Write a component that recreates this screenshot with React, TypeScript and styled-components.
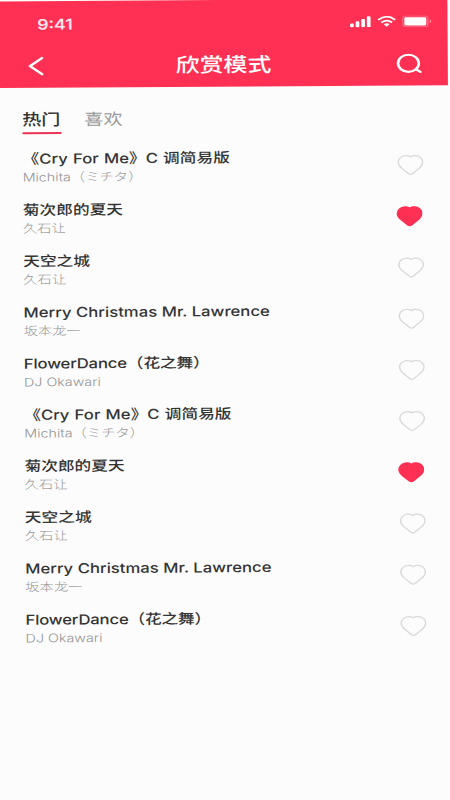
import React from "react";
import styled, { createGlobalStyle } from "styled-components";

const GlobalStyle = createGlobalStyle`
  * { box-sizing: border-box; }
  html, body { margin: 0; padding: 0; background: #fcfcfc; overflow: hidden; }
`;

const Viewport = styled.div`
  width: 450px;
  height: 800px;
  overflow: hidden;
  background: #fcfcfc;
  font-family: Inter, "Noto Sans CJK SC", sans-serif;
`;

/* A 375x812 layout, stretched and slightly tilted on the page. */
const Screen = styled.main`
  width: 375px;
  height: 812px;
  transform-origin: 0 0;
  transform: translateY(1.4px) rotate(-0.37deg) scale(1.193, 0.985);
`;

const Header = styled.header`
  height: 88px;
  margin-left: -2px;
  padding-left: 2px;
  background: #ff3054;
  color: #fff;
`;

const StatusBar = styled.div`
  height: 44px;
  padding: 2px 13.5px 0 31px;
  display: flex;
  align-items: center;
  justify-content: space-between;
`;

const Time = styled.span`
  padding-top: 1px;
  font-size: 14.8px;
  line-height: 18px;
  font-weight: 600;
  color: #ffe9ed;
`;

const StatusIcons = styled.div`
  display: flex;
  align-items: center;
  gap: 5px;
  svg { display: block; }
`;

const NavBar = styled.nav`
  height: 44px;
  padding: 0 19px 0 22px;
  display: grid;
  grid-template-columns: 22px 1fr 26px;
  align-items: center;
  svg { display: block; }
`;

const Title = styled.h1`
  margin: 0;
  text-align: center;
  font-size: 20px;
  line-height: 28px;
  font-weight: 500;
`;

const Tabs = styled.div`
  display: flex;
  gap: 20px;
  padding: 19.5px 0 0 18px;
`;

const Tab = styled.div<{ $active?: boolean }>`
  height: 28px;
  font-size: 16px;
  line-height: 24px;
  font-weight: ${(p) => (p.$active ? 500 : 400)};
  color: ${(p) => (p.$active ? "#333" : "#999")};
  &::after {
    content: "";
    display: block;
    height: 2.2px;
    margin: 1px -0.5px 0;
    border-radius: 1px;
    background: ${(p) => (p.$active ? "#ee3455" : "transparent")};
  }
`;

const List = styled.ul`
  list-style: none;
  margin: 0;
  padding: 6.8px 20px 0 18px;
`;

const Row = styled.li`
  height: 52px;
  display: flex;
  align-items: center;
  justify-content: space-between;
`;

const SongTitle = styled.div<{ $tracking?: number; $wordGap?: number }>`
  font-size: 14px;
  line-height: 20px;
  font-weight: 500;
  letter-spacing: ${(p) => p.$tracking ?? 0}px;
  word-spacing: ${(p) => p.$wordGap ?? 0}px;
  color: #333;
  white-space: nowrap;
`;

const Artist = styled.div`
  font-size: 12px;
  line-height: 17px;
  font-weight: 300;
  color: #959595;
  white-space: nowrap;
`;

const Heart = styled.svg<{ $liked?: boolean }>`
  display: block;
  width: 22.4px;
  height: 21.6px;
  margin-top: 1px;
  margin-right: ${(p) => (p.$liked ? 2 : 1)}px;
  fill: ${(p) => (p.$liked ? "#ff3054" : "none")};
  stroke: ${(p) => (p.$liked ? "#ff3054" : "#dadada")};
  stroke-width: 1.3;
  stroke-linejoin: round;
`;

const pieces = [
  { title: "《Cry For Me》C 调简易版", artist: "Michita（ミチタ）", wordGap: 0.6 },
  { title: "菊次郎的夏天", artist: "久石让", liked: true },
  { title: "天空之城", artist: "久石让" },
  { title: "Merry Christmas Mr. Lawrence", artist: "坂本龙一" },
  { title: "FlowerDance（花之舞）", artist: "DJ Okawari", tracking: -0.15 },
];
const songs = [...pieces, ...pieces];

export default function App() {
  return (
    <Viewport>
      <GlobalStyle />
      <Screen>
        <Header>
          <StatusBar>
            <Time>9:41</Time>
            <StatusIcons>
              <svg width="18" height="12" viewBox="0 0 18 12" fill="#fff">
                <rect x="0.3" y="7.8" width="3.1" height="3.7" rx="0.9" />
                <rect x="5" y="5.6" width="3.1" height="5.9" rx="0.9" />
                <rect x="9.7" y="3.2" width="3.1" height="8.3" rx="0.9" />
                <rect x="14.4" y="0.5" width="3.1" height="11" rx="0.9" />
              </svg>
              <svg width="16" height="12" viewBox="0 0 16 12" fill="none" stroke="#fff" strokeWidth="1.8">
                <path d="M.9 4.3Q8-2.2 15.1 4.3M3.5 7Q8 3 12.5 7" />
                <path d="M5.6 8.8Q8 6.8 10.4 8.8L8 11.2Z" fill="#fff" stroke="none" />
              </svg>
              <svg width="25" height="12" viewBox="0 0 25 12">
                <rect x="0.5" y="0.5" width="21" height="11" rx="2.6" fill="none" stroke="#fff" strokeOpacity=".3" />
                <rect x="1.8" y="1.8" width="18.4" height="8.4" rx="1.3" fill="#fff" />
                <path d="M23 4v4q1.4-.5 1.4-2T23 4Z" fill="#fff" fillOpacity=".4" />
              </svg>
            </StatusIcons>
          </StatusBar>
          <NavBar>
            <svg width="16" height="22" viewBox="0 0 16 22" fill="none" stroke="#fff" strokeWidth="2.3" strokeLinecap="round" strokeLinejoin="round">
              <path d="M12.8 2.8L2.8 11L12.8 19.2" />
            </svg>
            <Title>欣赏模式</Title>
            <svg width="26" height="24" viewBox="0 0 26 24" fill="none" stroke="#fff" strokeWidth="2.2" strokeLinecap="round">
              <circle cx="12" cy="11.5" r="8.7" />
              <path d="M18.3 17.6L22 20.2" />
            </svg>
          </NavBar>
        </Header>
        <Tabs>
          <Tab $active>热门</Tab>
          <Tab>喜欢</Tab>
        </Tabs>
        <List>
          {songs.map((song, i) => (
            <Row key={i}>
              <div>
                <SongTitle $tracking={song.tracking} $wordGap={song.wordGap}>
                  {song.title}
                </SongTitle>
                <Artist>{song.artist}</Artist>
              </div>
              <Heart $liked={song.liked} viewBox="0 0 24 22" preserveAspectRatio="none">
                <path d="M12 2.6C10.3 1 5.5.4 2.8 3.5C-.1 7 1 11.2 4.2 14.4L10 19.8Q12 21.6 14 19.8L19.8 14.4C23 11.2 24.1 7 21.2 3.5C18.5.4 13.7 1 12 2.6Z" />
              </Heart>
            </Row>
          ))}
        </List>
      </Screen>
    </Viewport>
  );
}
